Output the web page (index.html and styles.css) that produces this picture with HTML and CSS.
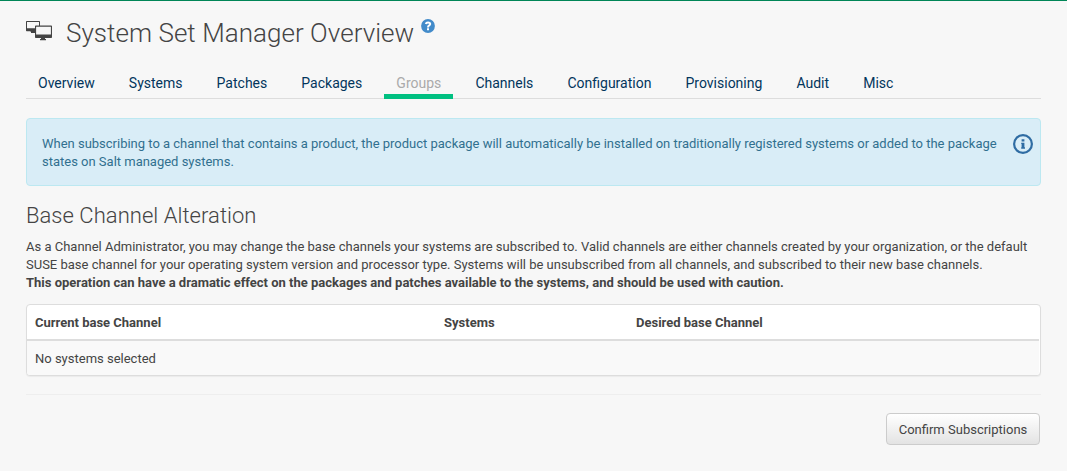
FILE: index.html
```html
<!DOCTYPE html>
<html lang="en">
<head>
<meta charset="utf-8">
<title>System Set Manager Overview</title>
<link rel="stylesheet" href="styles.css">
</head>
<body>
<main class="page">
  <header class="page-header">
    <svg class="systems-icon" width="26" height="21" viewBox="0 0 26 21">
      <path fill="#444" fill-rule="evenodd" d="M.7 0H13.300Q14 0 14 .7V5H13V1.100H1V7.200H9V12H5V11H4.600V10.300H.7Q0 10.300 0 9.600V.7Q0 0 .7 0Z"/>
      <path fill="#444" fill-rule="evenodd" d="M9.800 4.400H25.200Q26 4.400 26 5.200V16.200Q26 17 25.200 17H19V18H20V19.300H14V18H15V17H9.800Q9 17 9 16.200V5.200Q9 4.400 9.800 4.400ZM10.100 5.700V13.600H24.900V5.700Z"/>
    </svg>
    <h1 class="title">System Set Manager Overview</h1>
    <svg class="help-icon" width="14" height="14" viewBox="0 0 14 14">
      <circle cx="7" cy="7" r="6.900" fill="#428bca"/>
      <path d="M4.800 5.100Q5.200 3.500 7 3.500Q9.200 3.500 9.200 5.100Q9.200 6 8 6.600Q7 7.100 7 8.500" fill="none" stroke="#fff" stroke-width="2"/>
      <path d="M6 9.300H8V11.200H6Z" fill="#fff"/>
    </svg>
  </header>
  <nav class="tabs">
    <a class="tab">Overview</a>
    <a class="tab">Systems</a>
    <a class="tab">Patches</a>
    <a class="tab">Packages</a>
    <a class="tab tab-active">Groups</a>
    <a class="tab">Channels</a>
    <a class="tab">Configuration</a>
    <a class="tab">Provisioning</a>
    <a class="tab">Audit</a>
    <a class="tab">Misc</a>
  </nav>
  <div class="alert">
    <p class="alert-text">When subscribing to a channel that contains a product, the product package will automatically be installed on traditionally registered systems or added to the package states on Salt managed systems.</p>
    <svg class="info-icon" width="20" height="20" viewBox="0 0 20 20">
      <circle cx="10" cy="10" r="8.900" fill="none" stroke="#2f6ca3" stroke-width="2.200"/>
      <path d="M8.600 5.300H11.400V7.500H8.600ZM8.200 8.800H11.400V13.200H12V14.700H8.200V13.200H8.600V10H8.200Z" fill="#2f6ca3"/>
    </svg>
  </div>
  <h2 class="subtitle">Base Channel Alteration</h2>
  <p class="description">As a Channel Administrator, you may change the base channels your systems are subscribed to. Valid channels are either channels created by your organization, or the default SUSE base channel for your operating system version and processor type. Systems will be unsubscribed from all channels, and subscribed to their new base channels.<br><strong>This operation can have a dramatic effect on the packages and patches available to the systems, and should be used with caution.</strong></p>
  <div class="panel">
    <div class="row row-head"><span>Current base Channel</span><span>Systems</span><span>Desired base Channel</span></div>
    <div class="row row-body"><span>No systems selected</span></div>
  </div>
  <hr class="divider">
  <div class="actions"><button class="button" type="button">Confirm Subscriptions</button></div>
</main>
</body>
</html>
```
FILE: styles.css
```css
* { box-sizing: border-box; }
body {
  margin: 0;
  background: #f7f7f7;
  color: #444;
  font: 13px/18px Roboto, "Liberation Sans", sans-serif;
}
.page { height: 471px; padding: 0 26px; border-top: 1px solid #008657; overflow: hidden; }
.page-header { display: flex; align-items: flex-start; height: 66px; padding-top: 12px; }
.systems-icon { margin: 8px 14px 0 0; }
.title { margin: 0; font-size: 26px; line-height: 40px; font-weight: 300; letter-spacing: .04px; }
.help-icon { margin: 6px 0 0 7px; }
.tabs { display: flex; gap: 10.1px; height: 32px; border-bottom: 1px solid #ddd; }
.tab { height: 32px; padding: 0 12px; color: #02355c; font-size: 14px; line-height: 33px; }
.tab-active { color: #aaa; border-bottom: 5px solid #00c081; }
.alert {
  display: flex;
  justify-content: space-between;
  height: 68px;
  margin-top: 19px;
  padding: 15px 7px 15px 15px;
  background: #d9edf7;
  border: 1px solid #bce8f1;
  border-radius: 4px;
  color: #31708f;
}
.alert-text { width: 960px; margin: 0; padding-top: 1px; letter-spacing: -.008px; }
.info-icon { flex: none; }
.subtitle { margin: 17px 0 9px; font-size: 22px; line-height: 26px; font-weight: 300; letter-spacing: .04px; }
.description { margin: 0; letter-spacing: -.003px; }
.panel {
  height: 72px;
  margin-top: 12px;
  border: 1px solid #ddd;
  border-radius: 4px;
  background: #fff;
  box-shadow: 0 1px 1px rgba(0, 0, 0, .05);
  padding-right: 1px;
}
.row { display: grid; grid-template-columns: 409px 192px 1fr; padding: 0 8px; line-height: 36px; }
.row-head { height: 36px; border-bottom: 2px solid #ddd; font-weight: 700; }
.row-body { height: 34px; background: #f9f9f9; border-radius: 0 0 3px 3px; }
.divider { height: 1px; margin: 18px 0; border: 0; background: #eee; }
.actions { display: flex; justify-content: flex-end; padding-right: 1px; }
.button {
  width: 154px;
  height: 32px;
  padding: 1px 0 0;
  border: 1px solid #ccc;
  border-radius: 4px;
  background: linear-gradient(#fff, #e3e3e3);
  color: #444;
  font: 13px/18px Roboto, "Liberation Sans", sans-serif;
}
```
